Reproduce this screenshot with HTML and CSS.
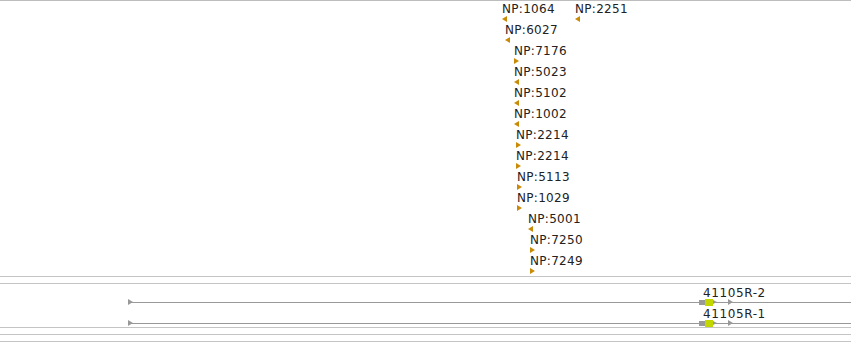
FILE: index.html
```html
<!DOCTYPE html>
<html lang="en">
<head>
    <meta charset="UTF-8">
    <title>Track view</title>
    <link rel="stylesheet" href="styles.css">
</head>
<body>
    <div class="panel">
        <div class="features">
            <div class="row">
                <div class="feature" style="left:502px"><span class="label">NP:1064</span><i class="tri left"></i></div>
                <div class="feature" style="left:575px"><span class="label">NP:2251</span><i class="tri left"></i></div>
            </div>
            <div class="row"><div class="feature" style="left:505px"><span class="label">NP:6027</span><i class="tri left"></i></div></div>
            <div class="row"><div class="feature" style="left:514px"><span class="label">NP:7176</span><i class="tri right"></i></div></div>
            <div class="row"><div class="feature" style="left:514px"><span class="label">NP:5023</span><i class="tri left"></i></div></div>
            <div class="row"><div class="feature" style="left:514px"><span class="label">NP:5102</span><i class="tri left"></i></div></div>
            <div class="row"><div class="feature" style="left:514px"><span class="label">NP:1002</span><i class="tri left"></i></div></div>
            <div class="row"><div class="feature" style="left:516px"><span class="label">NP:2214</span><i class="tri right"></i></div></div>
            <div class="row"><div class="feature" style="left:516px"><span class="label">NP:2214</span><i class="tri right"></i></div></div>
            <div class="row"><div class="feature" style="left:517px"><span class="label">NP:5113</span><i class="tri right"></i></div></div>
            <div class="row"><div class="feature" style="left:517px"><span class="label">NP:1029</span><i class="tri right"></i></div></div>
            <div class="row"><div class="feature" style="left:528px"><span class="label">NP:5001</span><i class="tri left"></i></div></div>
            <div class="row"><div class="feature" style="left:530px"><span class="label">NP:7250</span><i class="tri right"></i></div></div>
            <div class="row"><div class="feature" style="left:530px"><span class="label">NP:7249</span><i class="tri right"></i></div></div>
        </div>

        <div class="rule"></div>
        <div class="rule"></div>

        <div class="genes">
            <div class="gene-row">
                <span class="gene-label" style="left:703px">41105R-2</span>
                <div class="gene-line" style="left:128px"></div>
                <i class="arrow" style="left:128px"></i>
                <div class="utr" style="left:699px"></div>
                <div class="cds" style="left:705px"></div>
                <i class="arrow small" style="left:713px"></i>
                <i class="arrow" style="left:728px"></i>
            </div>
            <div class="gene-row">
                <span class="gene-label" style="left:703px">41105R-1</span>
                <div class="gene-line" style="left:128px"></div>
                <i class="arrow" style="left:128px"></i>
                <div class="utr" style="left:699px"></div>
                <div class="cds" style="left:705px"></div>
                <i class="arrow small" style="left:713px"></i>
                <i class="arrow" style="left:728px"></i>
            </div>
        </div>

        <div class="rule first"></div>
        <div class="rule"></div>
        <div class="rule"></div>
    </div>
</body>
</html>
```

FILE: styles.css
```css
body {
    margin: 0;
    background-color: #fff;
    font-family: "DejaVu Sans", Verdana, sans-serif;
    color: #222;
}

.panel {
    width: 851px;
    height: 343px;
    overflow: hidden;
    border-top: 1px solid #bdbdbd;
}

.features {
    height: 275px;
}

.row {
    position: relative;
    height: 21px;
}

.feature {
    position: absolute;
    top: 0;
    display: flex;
    flex-direction: column;
    align-items: flex-start;
}

.label {
    font-size: 12px;
    line-height: 14px;
    padding-top: 1px;
    letter-spacing: 0.3px;
    white-space: nowrap;
}

.tri {
    width: 0;
    height: 0;
    border-top: 3px solid transparent;
    border-bottom: 3px solid transparent;
}

.tri.left {
    border-right: 5px solid #c98b06;
}

.tri.right {
    border-left: 5px solid #c98b06;
}

.rule {
    height: 0;
    border-top: 1px solid #c4c4c4;
    margin-bottom: 6px;
}

.rule.first {
    margin-top: 1px;
}

.genes {
    margin-top: -6px;
}

.gene-row {
    position: relative;
    height: 21px;
}

.gene-label {
    position: absolute;
    top: 2px;
    font-size: 12px;
    line-height: 15px;
    letter-spacing: 0.6px;
    white-space: nowrap;
}

.gene-line {
    position: absolute;
    top: 18px;
    right: 0;
    height: 1px;
    background-color: #999;
}

.arrow {
    position: absolute;
    top: 15px;
    width: 0;
    height: 0;
    border-top: 3px solid transparent;
    border-bottom: 3px solid transparent;
    border-left: 5px solid #999;
}

.arrow.small {
    top: 16px;
    border-top-width: 2px;
    border-bottom-width: 2px;
    border-left-width: 4px;
}

.utr {
    position: absolute;
    top: 16px;
    width: 6px;
    height: 5px;
    background-color: #999;
}

.cds {
    position: absolute;
    top: 15px;
    width: 8px;
    height: 7px;
    background-color: #c2d600;
}
```
